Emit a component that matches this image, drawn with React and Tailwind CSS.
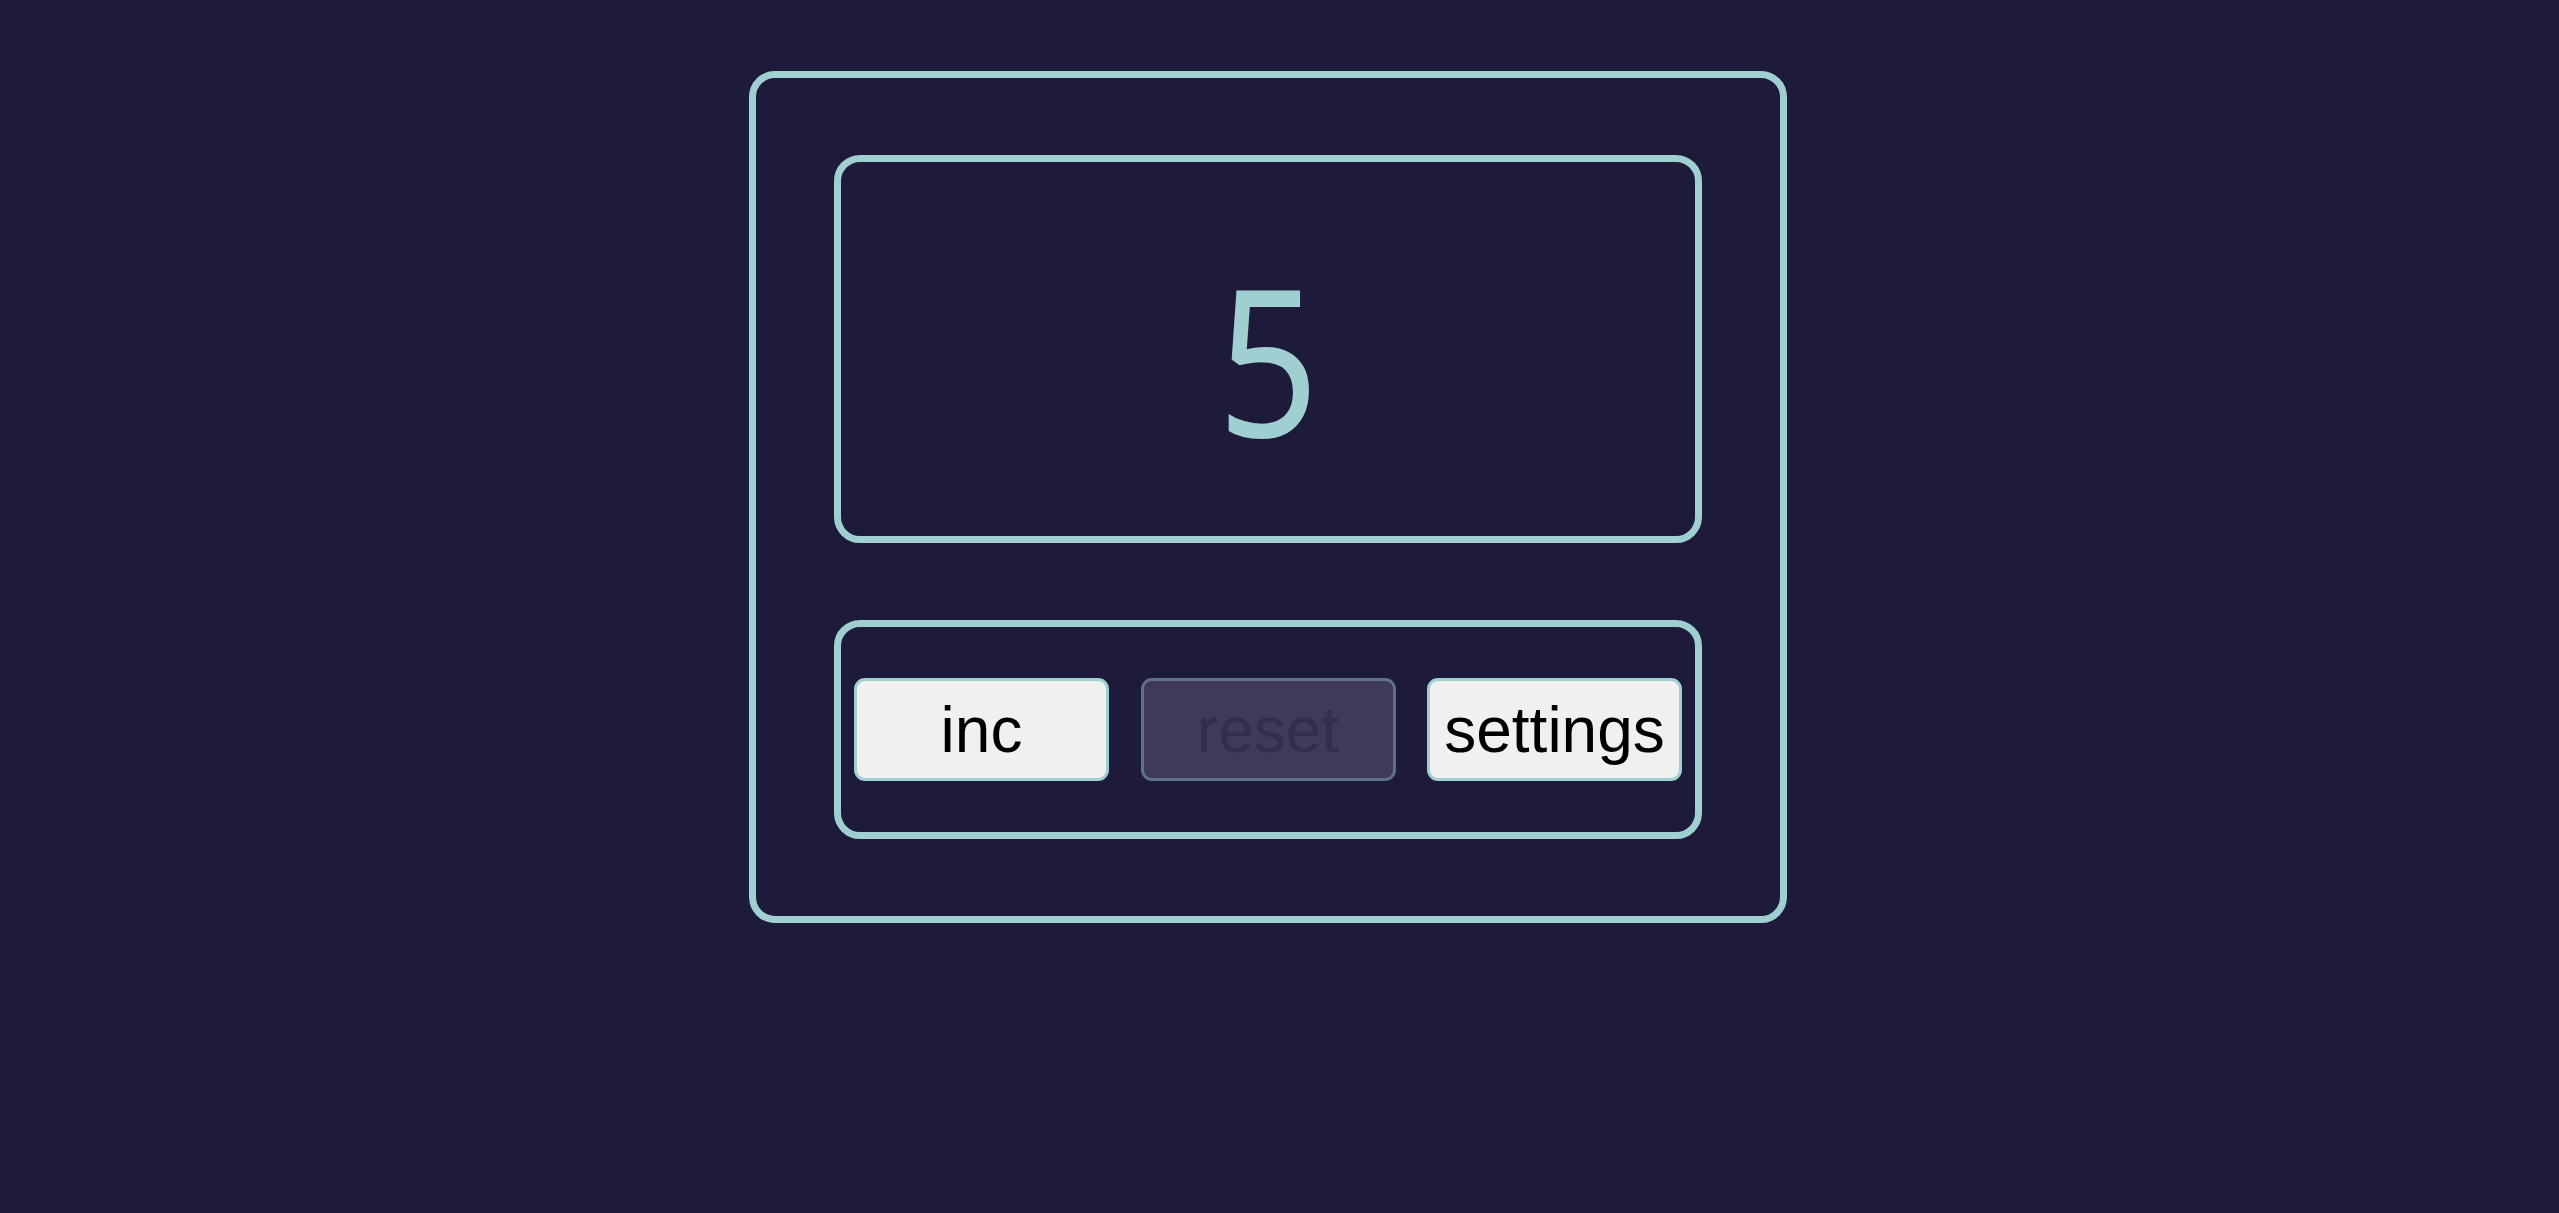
import { useState } from 'react'

const BOX = 'border-[7px] border-[#9fcfd0] rounded-[26px]'

export default function App() {
  const [count, setCount] = useState(5)
  const max = 10
  const start = 0

  return (
    <div className="min-h-[1367px] bg-[#1e1a3a] pt-[71px] pr-[23px]">
      <div className={`w-[1038px] mx-auto px-[78px] py-[77px] ${BOX}`}>
        {/* Display */}
        <div className={`h-[388px] flex items-center justify-center ${BOX}`}>
          <span className="inline-block scale-x-[0.87] text-[204px] leading-none text-[#9fcfd0] font-['Noto_Sans','Open_Sans',sans-serif] pt-[18px]">
            {count}
          </span>
        </div>

        {/* Controls */}
        <div className={`mt-[77px] h-[219px] flex items-center justify-between px-[13px] ${BOX}`}>
          <Button onClick={() => setCount(c => Math.min(c + 1, max))} disabled={count >= max}>inc</Button>
          <Button onClick={() => setCount(start)} disabled={count > start}>reset</Button>
          <Button>settings</Button>
        </div>
      </div>
    </div>
  )
}

function Button({ children, onClick, disabled }) {
  return (
    <button
      onClick={onClick}
      disabled={disabled}
      className={`w-[255px] h-[103px] rounded-[11px] border-[3px] text-[64px] leading-none font-['Liberation_Sans',Arial,sans-serif] ${
        disabled
          ? 'bg-[#3e3a58] border-[#5e7186] text-[#332e4d]'
          : 'bg-[#f0f0f0] border-[#9fcfd0] text-black'
      }`}
    >
      {children}
    </button>
  )
}
